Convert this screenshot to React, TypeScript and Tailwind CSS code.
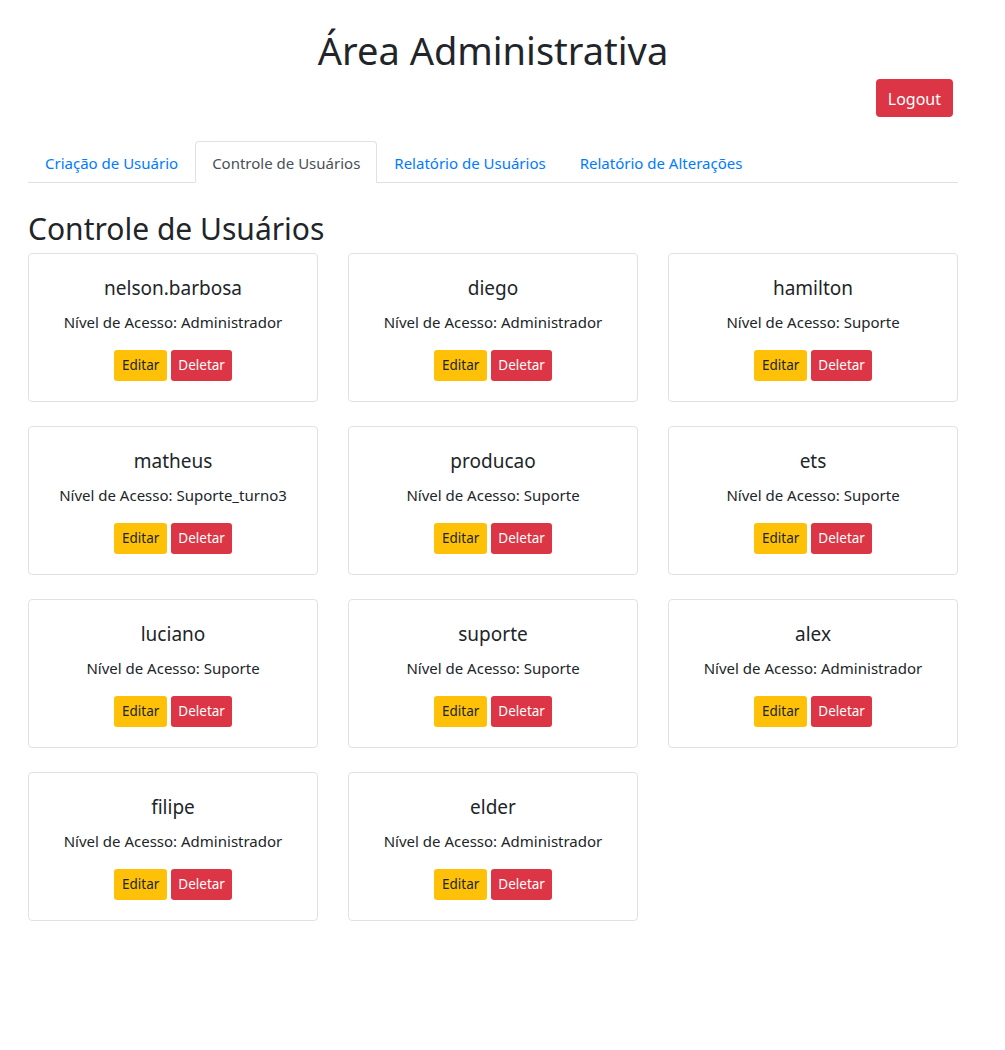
import React from "react";

const users = [
  { name: "nelson.barbosa", level: "Administrador" },
  { name: "diego", level: "Administrador" },
  { name: "hamilton", level: "Suporte" },
  { name: "matheus", level: "Suporte_turno3" },
  { name: "producao", level: "Suporte" },
  { name: "ets", level: "Suporte" },
  { name: "luciano", level: "Suporte" },
  { name: "suporte", level: "Suporte" },
  { name: "alex", level: "Administrador" },
  { name: "filipe", level: "Administrador" },
  { name: "elder", level: "Administrador" },
];

const tabs = ["Criação de Usuário", "Controle de Usuários", "Relatório de Usuários", "Relatório de Alterações"];

export default function App() {
  return (
    <div
      className="min-h-[1050px] bg-white text-[#212529] w-[988px]"
      style={{ fontFamily: '"Noto Sans", "Open Sans", sans-serif' }}
    >
      <div className="w-[930px] ml-[28px]">
        <h1 className="text-center text-[38px] leading-[48px] pt-[26px] font-normal">Área Administrativa</h1>
        <div className="flex justify-end mt-[5px] pr-[5px]">
          <button className="h-[38px] px-3 pt-[2px] rounded bg-[#dc3545] text-white text-base">Logout</button>
        </div>
        <div className="flex mt-[24px] border-b border-[#dee2e6] h-[42px]">
          {tabs.map((t, i) =>
            i === 1 ? (
              <div
                key={t}
                className="px-4 pt-[3px] h-[42px] flex items-center border border-[#dee2e6] border-b-white rounded-t bg-white text-[#495057] text-[15px] -mb-px"
              >
                {t}
              </div>
            ) : (
              <div key={t} className="px-4 pt-[3px] h-[41px] flex items-center text-[#007bff] text-[15px] border border-transparent">
                {t}
              </div>
            )
          )}
        </div>
        <h2 className="text-[30px] leading-[38px] mt-[27px] mb-[5px] font-normal">Controle de Usuários</h2>
        <div className="grid grid-cols-3 gap-x-[30px] gap-y-[24px]">
          {users.map((u) => (
            <div key={u.name} className="border border-[#dee2e6] rounded h-[149px] p-5 text-center">
              <div className="text-[19px] leading-[24px] mt-[2px]">{u.name}</div>
              <div className="text-[15px] leading-[24px] mt-[10px]">Nível de Acesso: {u.level}</div>
              <div className="flex justify-center gap-1 mt-4">
                <button className="h-[31px] px-2 rounded-[3px] bg-[#ffc107] text-[#212529] text-[13.5px]">Editar</button>
                <button className="h-[31px] px-[7px] rounded-[3px] bg-[#dc3545] text-white text-[13.5px]">Deletar</button>
              </div>
            </div>
          ))}
        </div>
      </div>
    </div>
  );
}
